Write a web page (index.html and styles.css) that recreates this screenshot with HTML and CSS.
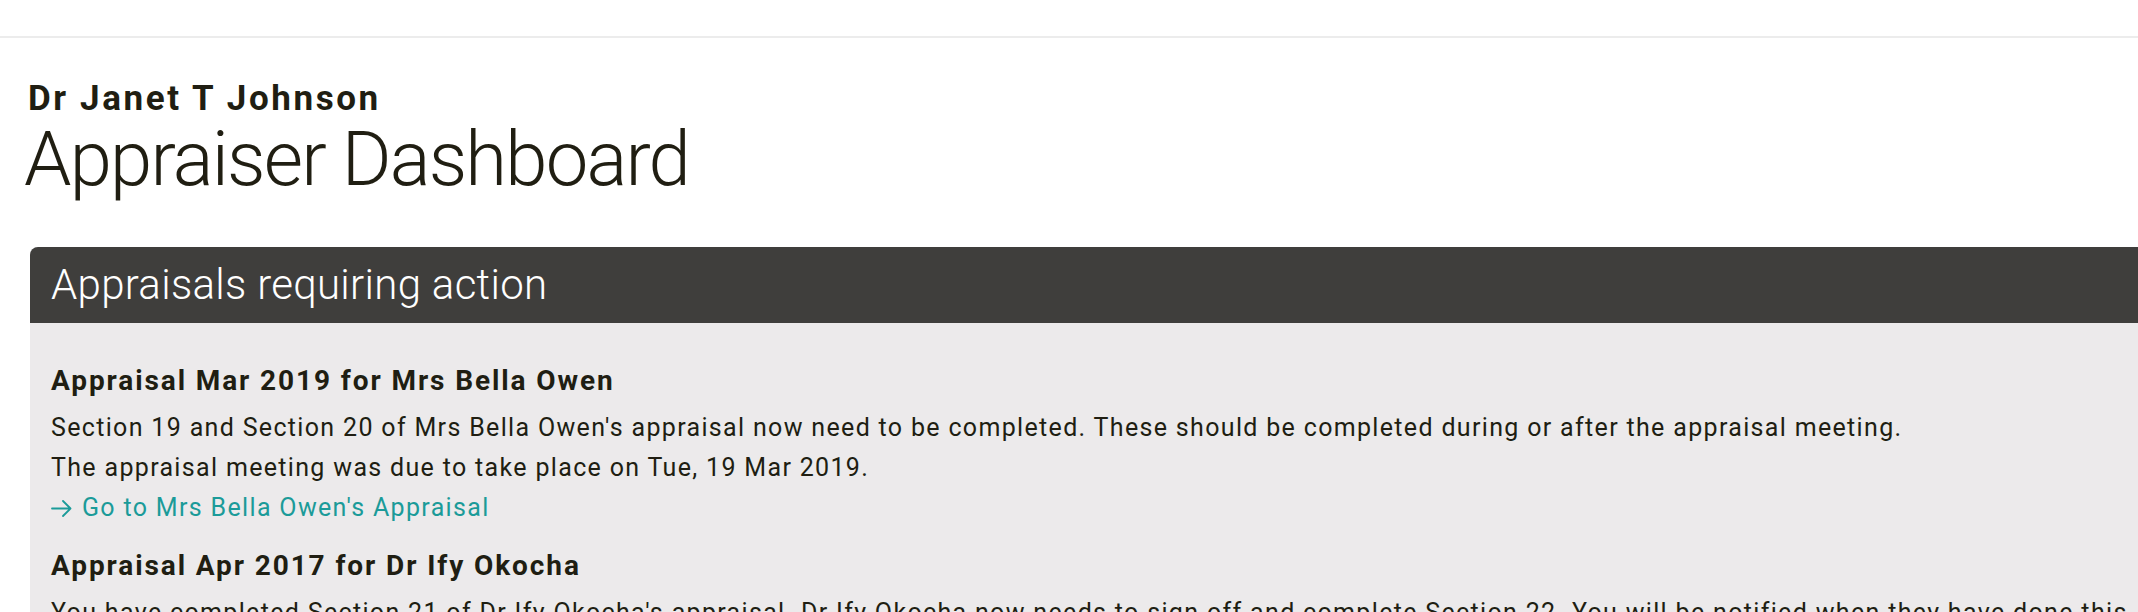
FILE: index.html
```html
<!DOCTYPE html>
<html lang="en">
<head>
<meta charset="utf-8">
<title>Appraiser Dashboard</title>
<link rel="stylesheet" href="styles.css">
</head>
<body>
<header class="topbar"></header>
<main class="page">
  <div class="person">Dr Janet T Johnson</div>
  <h1 class="title">Appraiser Dashboard</h1>
  <section class="panel">
    <h2 class="panel-head">Appraisals requiring action</h2>
    <div class="panel-body">
      <article class="item">
        <h3 class="item-title">Appraisal Mar 2019 for Mrs Bella Owen</h3>
        <p class="item-text">Section 19 and Section 20 of Mrs Bella Owen's appraisal now need to be completed. These should be completed during or after the appraisal meeting.</p>
        <p class="item-text">The appraisal meeting was due to take place on Tue, 19 Mar 2019.</p>
        <a class="item-link" href="#"><svg class="arrow" width="21" height="17" viewBox="0 0 21 17" fill="none" stroke="currentColor" stroke-width="1.8" stroke-linecap="round" stroke-linejoin="round"><path d="M1 8.5H19.5M12 1L19.5 8.5L12 16"/></svg>Go to Mrs Bella Owen's Appraisal</a>
      </article>
      <article class="item">
        <h3 class="item-title">Appraisal Apr 2017 for Dr Ify Okocha</h3>
        <p class="item-text">You have completed Section 21 of Dr Ify Okocha's appraisal. Dr Ify Okocha now needs to sign off and complete Section 22. You will be notified when they have done this.</p>
      </article>
    </div>
  </section>
</main>
</body>
</html>
```
FILE: styles.css
```css
html, body {
  margin: 0;
  padding: 0;
  overflow: hidden;
  background: #ffffff;
}
body {
  font-family: Roboto, "Liberation Sans", sans-serif;
  color: #201e12;
}
.topbar {
  height: 36px;
  border-bottom: 2px solid #ececec;
  background: #ffffff;
}
.page {
  padding: 41px 0 0 28px;
}
.person {
  font-size: 35px;
  font-weight: 700;
  line-height: 40px;
  letter-spacing: 2.6px;
}
.title {
  margin: 0 0 0 -4px;
  font-size: 76px;
  font-weight: 300;
  line-height: 80px;
  letter-spacing: -1.8px;
}
.panel {
  margin: 48px -40px 0 2px;
  background: #eceaeb;
  border-radius: 8px 8px 0 0;
  overflow: hidden;
}
.panel-head {
  margin: 0;
  padding: 0 21px;
  height: 76px;
  line-height: 76px;
  background: #3f3e3c;
  color: #ffffff;
  font-size: 42px;
  font-weight: 300;
  letter-spacing: 0.3px;
}
.panel-body {
  padding: 40px 21px 40px;
}
.item-title {
  margin: 0 0 9px;
  font-size: 28px;
  font-weight: 700;
  line-height: 36px;
  letter-spacing: 1.9px;
}
.item-text {
  margin: 0;
  font-size: 25px;
  line-height: 40px;
  letter-spacing: 1.33px;
  white-space: nowrap;
}
.item + .item {
  margin-top: 20px;
}
.item-link {
  display: flex;
  align-items: center;
  gap: 10px;
  font-size: 25px;
  line-height: 40px;
  letter-spacing: 1.33px;
  color: #1b9b99;
  text-decoration: none;
}
.arrow {
  flex: none;
}
```
